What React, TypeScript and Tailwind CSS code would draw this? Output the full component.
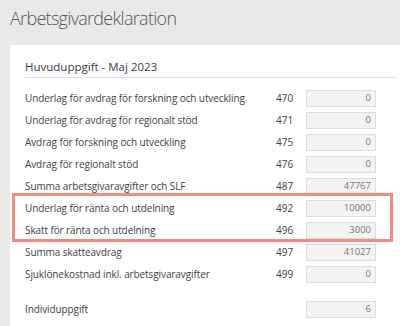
const rows = [
  { label: 'Underlag för avdrag för forskning och utveckling', code: '470', value: '0' },
  { label: 'Underlag för avdrag för regionalt stöd', code: '471', value: '0' },
  { label: 'Avdrag för forskning och utveckling', code: '475', value: '0' },
  { label: 'Avdrag för regionalt stöd', code: '476', value: '0' },
  { label: 'Summa arbetsgivaravgifter och SLF', code: '487', value: '47767' },
]

const marked = [
  { label: 'Underlag för ränta och utdelning', code: '492', value: '10000' },
  { label: 'Skatt för ränta och utdelning', code: '496', value: '3000' },
]

const rest = [
  { label: 'Summa skatteavdrag', code: '497', value: '41027' },
  { label: 'Sjuklönekostnad inkl. arbetsgivaravgifter', code: '499', value: '0' },
]

function Row({ label, code, value }: { label: string; code: string; value: string }) {
  return (
    <div className="flex items-center h-[22px]">
      <div className="w-[251px] text-[10px] tracking-[-0.1px] text-[#3e3e46] whitespace-nowrap">{label}</div>
      <div className="w-[30px] text-[10px] text-[#3e3e46]">{code}</div>
      <div className="w-[70px] h-[17px] border border-[#dcdcdc] bg-[#f3f3f3] flex items-center justify-end pr-[4px] text-[9.5px] text-[#777]">
        {value}
      </div>
    </div>
  )
}

export default function App() {
  return (
    <div
      className="w-[400px] h-[326px] bg-[#e9e9e9] overflow-hidden flex flex-col"
      style={{ fontFamily: '"Open Sans", "Liberation Sans", sans-serif' }}
    >
      {/* Page title */}
      <div className="h-[45px] pl-[10px] pt-[9px] shrink-0">
        <h1 className="text-[18px] leading-[18px] tracking-[-0.7px] font-light text-[#555]">Arbetsgivardeklaration</h1>
      </div>

      {/* Card */}
      <div className="ml-[10px] flex-1 bg-white pl-[15px] pr-[3px] pt-[16px]">
        <div className="border-b border-[#dedede] pb-[5px]">
          <h2 className="text-[11.5px] leading-[11px] text-[#363c4a]">Huvuduppgift - Maj 2023</h2>
        </div>

        <div className="mt-[9px]">
          {rows.map((r) => (
            <Row key={r.code} {...r} />
          ))}
          <div className="relative">
            {marked.map((r) => (
              <Row key={r.code} {...r} />
            ))}
            <span className="absolute -left-[13px] -top-[4px] right-[4px] -bottom-[1px] border-[3px] border-[#f58a80] pointer-events-none" />
          </div>
          {rest.map((r) => (
            <Row key={r.code} {...r} />
          ))}
          <div className="mt-[13px]">
            <Row label="Individuppgift" code="" value="6" />
          </div>
        </div>
      </div>
    </div>
  )
}
